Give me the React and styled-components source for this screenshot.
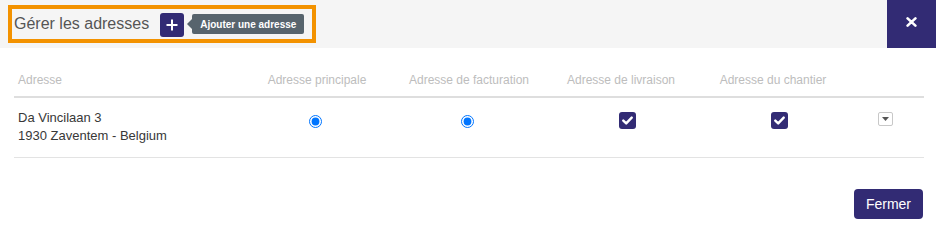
import styled, { createGlobalStyle } from "styled-components";

const GlobalStyle = createGlobalStyle`
  html, body {
    margin: 0;
    padding: 0;
    background: #fff;
    font-family: "Liberation Sans", Arial, sans-serif;
  }
  *, *::before, *::after {
    box-sizing: border-box;
  }
`;

const INDIGO = "#322b74";

const Modal = styled.div`
  width: 936px;
  height: 234px;
  display: flex;
  flex-direction: column;
  background: #fff;
`;

const Header = styled.div`
  height: 48px;
  background: #f5f5f5;
  display: flex;
  align-items: flex-start;
  justify-content: space-between;
`;

const TitleBox = styled.div`
  margin: 5px 0 0 8px;
  height: 38px;
  width: 308px;
  border: 4px solid #f39200;
  display: flex;
  align-items: center;
  padding-left: 2px;
`;

const Title = styled.h4`
  margin: 0;
  font-size: 16px;
  font-weight: normal;
  color: #555;
  margin-right: 11px;
`;

const AddButton = styled.button`
  width: 24px;
  height: 24px;
  border: none;
  border-radius: 3px;
  background: ${INDIGO};
  display: flex;
  align-items: center;
  justify-content: center;
  padding: 0;
  margin-top: 1px;
`;

const Tooltip = styled.span`
  position: relative;
  margin-left: 8px;
  height: 20px;
  padding: 0 8px;
  display: flex;
  align-items: center;
  background: #57646d;
  color: #fff;
  font-size: 10px;
  font-weight: bold;
  border-radius: 2px;
  &::before {
    content: "";
    position: absolute;
    left: -5px;
    top: 5px;
    border-top: 5px solid transparent;
    border-bottom: 5px solid transparent;
    border-right: 5px solid #57646d;
  }
`;

const CloseButton = styled.button`
  width: 49px;
  height: 48px;
  border: none;
  background: ${INDIGO};
  display: flex;
  align-items: center;
  justify-content: center;
  padding: 0 0 4px 0;
`;

const Body = styled.div`
  flex: 1;
  padding: 15px 12px 0 14px;
  display: flex;
  flex-direction: column;
`;

const Table = styled.table`
  width: 910px;
  border-collapse: collapse;
  table-layout: fixed;
`;

const Th = styled.th`
  width: ${(p) => p.$w}px;
  font-size: 12px;
  font-weight: normal;
  color: #bdbdbd;
  text-align: ${(p) => (p.$left ? "left" : "center")};
  padding: 9px 4px 8px;
  line-height: 16px;
  border-bottom: 2px solid #dedede;
`;

const Td = styled.td`
  font-size: 13px;
  color: #383838;
  line-height: 18px;
  padding: 11px 4px 12px;
  text-align: ${(p) => (p.$left ? "left" : "center")};
  vertical-align: top;
  border-bottom: 1px solid #e3e3e3;
`;

const CellInner = styled.div`
  display: flex;
  justify-content: center;
  padding-top: ${(p) => p.$top || 0}px;
  transform: translateX(${(p) => p.$shift || 0}px);
`;

const Radio = styled.input`
  margin: 0;
  width: 13px;
  height: 13px;
`;

const CheckBox = styled.span`
  width: 17px;
  height: 17px;
  border-radius: 3px;
  background: ${INDIGO};
  display: flex;
  align-items: center;
  justify-content: center;
`;

const Dropdown = styled.button`
  width: 15px;
  height: 14px;
  padding: 0;
  border: 1px solid #c8c8c8;
  border-radius: 2px;
  background: #fff;
  display: flex;
  align-items: center;
  justify-content: center;
`;

const Footer = styled.div`
  display: flex;
  justify-content: flex-end;
  padding-top: 31px;
  padding-right: 1px;
`;

const PrimaryButton = styled.button`
  height: 30px;
  padding: 0 12px;
  border: none;
  border-radius: 4px;
  background: ${INDIGO};
  color: #fff;
  font-family: "Liberation Sans", Arial, sans-serif;
  font-size: 14px;
`;

const Check = () => (
  <CheckBox>
    <svg width="11" height="9" viewBox="0 0 11 9">
      <path d="M1.3 4.6 L4.2 7.4 L9.7 1.6" stroke="#fff" strokeWidth="2.4" fill="none" strokeLinecap="round" strokeLinejoin="round" />
    </svg>
  </CheckBox>
);

const columns = [
  { label: "Adresse", w: 227, left: true },
  { label: "Adresse principale", w: 152 },
  { label: "Adresse de facturation", w: 152 },
  { label: "Adresse de livraison", w: 152 },
  { label: "Adresse du chantier", w: 152 },
  { label: "", w: 75 },
];

export default function App() {
  return (
    <>
      <GlobalStyle />
      <Modal>
        <Header>
          <TitleBox>
            <Title>Gérer les adresses</Title>
            <AddButton>
              <svg width="12" height="12" viewBox="0 0 12 12">
                <path d="M6 0.5 V11.5 M0.5 6 H11.5" stroke="#fff" strokeWidth="2" />
              </svg>
            </AddButton>
            <Tooltip>Ajouter une adresse</Tooltip>
          </TitleBox>
          <CloseButton>
            <svg width="11" height="10" viewBox="0 0 11 10">
              <path d="M1.6 1.4 L9.4 8.6 M9.4 1.4 L1.6 8.6" stroke="#fff" strokeWidth="2.6" strokeLinecap="round" />
            </svg>
          </CloseButton>
        </Header>
        <Body>
          <Table>
            <thead>
              <tr>
                {columns.map((c, i) => (
                  <Th key={i} $w={c.w} $left={c.left}>
                    {c.label}
                  </Th>
                ))}
              </tr>
            </thead>
            <tbody>
              <tr>
                <Td $left>
                  Da Vincilaan 3
                  <br />
                  1930 Zaventem - Belgium
                </Td>
                <Td>
                  <CellInner $top={6} $shift={-2}>
                    <Radio type="radio" name="principale" defaultChecked />
                  </CellInner>
                </Td>
                <Td>
                  <CellInner $top={6} $shift={-2}>
                    <Radio type="radio" name="facturation" defaultChecked />
                  </CellInner>
                </Td>
                <Td>
                  <CellInner $top={3} $shift={6}>
                    <Check />
                  </CellInner>
                </Td>
                <Td>
                  <CellInner $top={3} $shift={6}>
                    <Check />
                  </CellInner>
                </Td>
                <Td>
                  <CellInner $top={3} $shift={-1}>
                    <Dropdown>
                      <svg width="7" height="4" viewBox="0 0 7 4">
                        <path d="M0 0 H7 L3.5 4 Z" fill="#555" />
                      </svg>
                    </Dropdown>
                  </CellInner>
                </Td>
              </tr>
            </tbody>
          </Table>
          <Footer>
            <PrimaryButton>Fermer</PrimaryButton>
          </Footer>
        </Body>
      </Modal>
    </>
  );
}
